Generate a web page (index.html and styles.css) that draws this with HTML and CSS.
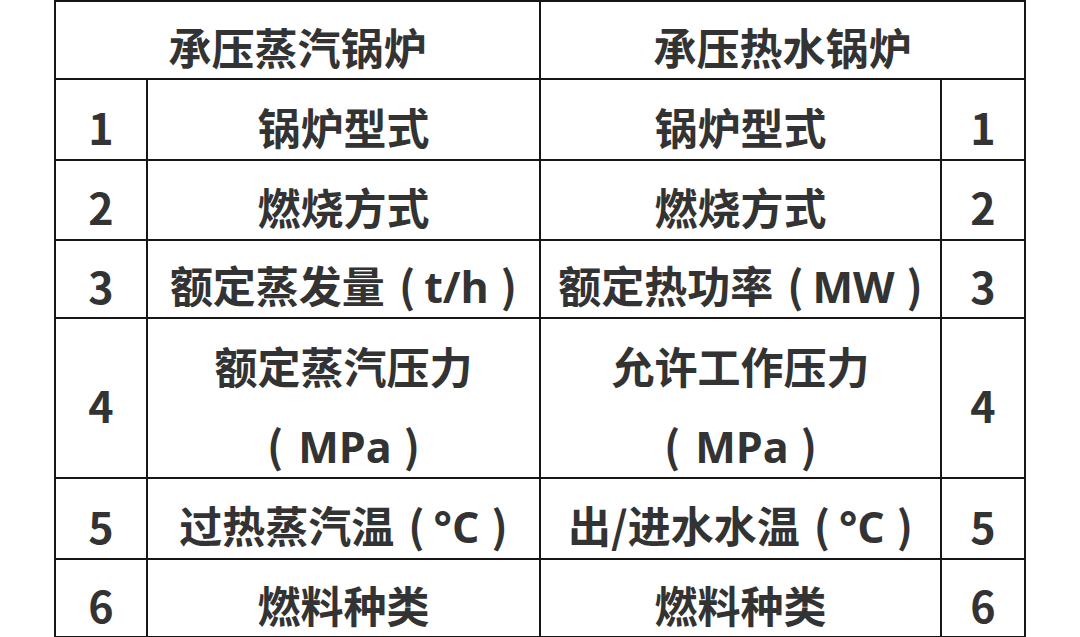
FILE: index.html
```html
<!DOCTYPE html>
<html lang="zh-CN">
<head>
<meta charset="utf-8">
<link rel="stylesheet" href="styles.css">
</head>
<body>
<table class="spec">
  <colgroup>
    <col class="c-num">
    <col class="c-steam">
    <col class="c-water">
    <col class="c-num2">
  </colgroup>
  <tr class="r-head">
    <th colspan="2">承压蒸汽锅炉</th>
    <th colspan="2">承压热水锅炉</th>
  </tr>
  <tr class="r1">
    <td>1</td><td>锅炉型式</td><td>锅炉型式</td><td>1</td>
  </tr>
  <tr class="r2">
    <td>2</td><td>燃烧方式</td><td>燃烧方式</td><td>2</td>
  </tr>
  <tr class="r3">
    <td>3</td>
    <td>额定蒸发量<span class="unit"><span class="po">(</span>t/h<span class="pc">)</span></span></td>
    <td>额定热功率<span class="unit"><span class="po">(</span>MW<span class="pc">)</span></span></td>
    <td>3</td>
  </tr>
  <tr class="r4">
    <td>4</td>
    <td class="two"><span class="ln">额定蒸汽压力</span><span class="ln ln2 unit"><span class="po po-solo">(</span>MPa<span class="pc">)</span></span></td>
    <td class="two"><span class="ln">允许工作压力</span><span class="ln ln2 unit"><span class="po po-solo">(</span>MPa<span class="pc">)</span></span></td>
    <td>4</td>
  </tr>
  <tr class="r5">
    <td>5</td>
    <td>过热蒸汽温<span class="unit"><span class="po">(</span>°C<span class="pc">)</span></span></td>
    <td>出/进水水温<span class="unit"><span class="po">(</span>°C<span class="pc">)</span></span></td>
    <td>5</td>
  </tr>
  <tr class="r6">
    <td>6</td><td>燃料种类</td><td>燃料种类</td><td>6</td>
  </tr>
</table>
</body>
</html>
```
FILE: styles.css
```css
html, body {
  margin: 0;
  padding: 0;
  background: #ffffff;
}

.spec {
  margin-left: 54px;
  border-collapse: collapse;
  table-layout: fixed;
  width: 972px;
  font-family: "Noto Sans CJK SC", "Noto Sans", sans-serif;
  font-weight: 700;
  font-size: 43px;
  color: #333333;
}

.c-num { width: 92px; }
.c-steam { width: 393px; }
.c-water { width: 401px; }
.c-num2 { width: 84px; }

.spec th,
.spec td {
  border: 2px solid #161616;
  text-align: center;
  vertical-align: middle;
  padding: 14px 0 0 0;
  line-height: 1.25;
  font-weight: 700;
  white-space: nowrap;
}

.unit {
  font-family: "Open Sans", "Noto Sans CJK SC", sans-serif;
  font-weight: 700;
}

.po,
.pc {
  font-family: "Noto Sans CJK SC", sans-serif;
  font-weight: 700;
}

.po {
  margin: 0 9px 0 14px;
}

.po-solo {
  margin: 0 15px 0 0;
}

.pc {
  margin-left: 12px;
}

.r-head { height: 78px; }
.r1 { height: 81px; }
.r2 { height: 80px; }
.r3 { height: 78px; }
.r4 { height: 159px; }
.r5 { height: 81px; }
.r6 { height: 78px; }

.spec td.two {
  vertical-align: top;
  padding-top: 16px;
  line-height: 60px;
}

.ln {
  display: block;
}

.ln2 {
  margin-top: 19px;
}
```
